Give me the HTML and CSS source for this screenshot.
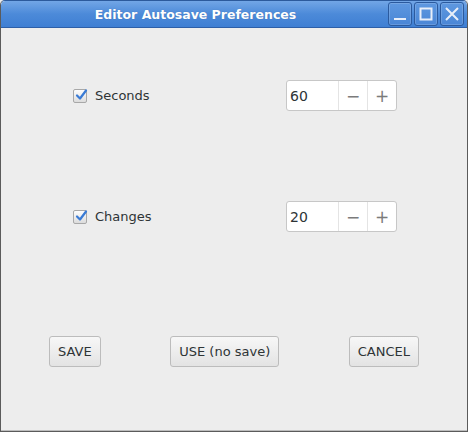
FILE: index.html
```html
<!DOCTYPE html>
<html>
<head>
<meta charset="utf-8">
<link rel="stylesheet" href="styles.css">
</head>
<body>
<div class="window">
  <div class="titlebar">
    <div class="title">Editor Autosave Preferences</div>
    <div class="wm-buttons">
      <div class="wm-btn"><svg width="22" height="22" viewBox="0 0 22 22"><rect x="5" y="15" width="12" height="2" fill="#e8eef8"/></svg></div>
      <div class="wm-btn"><svg width="22" height="22" viewBox="0 0 22 22"><rect x="5.5" y="5.5" width="11" height="11" fill="none" stroke="#e8eef8" stroke-width="2"/></svg></div>
      <div class="wm-btn"><svg width="22" height="22" viewBox="0 0 22 22"><path d="M5 5 L17 17 M17 5 L5 17" stroke="#e8eef8" stroke-width="2"/></svg></div>
    </div>
  </div>
  <div class="content">
    <div class="row">
      <label class="check">
        <span class="box"><svg width="14" height="14" viewBox="0 0 14 14"><path d="M3 7.5 L6 10.5 L12 2.5" fill="none" stroke="#3a7bd5" stroke-width="2.2" stroke-linecap="round" stroke-linejoin="round"/></svg></span>
        <span>Seconds</span>
      </label>
      <div class="spinner">
        <div class="field">60</div>
        <div class="sbtn">−</div>
        <div class="sbtn">+</div>
      </div>
    </div>
    <div class="row row2">
      <label class="check">
        <span class="box"><svg width="14" height="14" viewBox="0 0 14 14"><path d="M3 7.5 L6 10.5 L12 2.5" fill="none" stroke="#3a7bd5" stroke-width="2.2" stroke-linecap="round" stroke-linejoin="round"/></svg></span>
        <span>Changes</span>
      </label>
      <div class="spinner">
        <div class="field">20</div>
        <div class="sbtn">−</div>
        <div class="sbtn">+</div>
      </div>
    </div>
    <div class="buttons">
      <button class="btn">SAVE</button>
      <button class="btn">USE (no save)</button>
      <button class="btn">CANCEL</button>
    </div>
  </div>
</div>
</body>
</html>
```
FILE: styles.css
```css
html, body {
  margin: 0;
  padding: 0;
  background: #ededed;
}
body {
  font-family: "DejaVu Sans", sans-serif;
  font-size: 13px;
  color: #2e3436;
}
.window {
  width: 468px;
  height: 432px;
  box-sizing: border-box;
  border: 1px solid #5b5b5b;
  border-top-color: #2c5a9c;
  border-radius: 5px 5px 0 0;
  background: #ededed;
  display: flex;
  flex-direction: column;
  overflow: hidden;
  box-shadow: inset 0 -1px 0 #bdbdbd;
}
.titlebar {
  height: 26px;
  flex: none;
  display: flex;
  align-items: center;
  background: linear-gradient(#72a6e6, #4c8ad9 50%, #3f7fd3);
  border-bottom: 1px solid #2d5fa8;
  border-radius: 4px 4px 0 0;
}
.title {
  flex: 1;
  text-align: center;
  color: #fff;
  font-weight: bold;
  font-size: 12.5px;
  padding-left: 2px;
  text-shadow: 0 0 1px rgba(0,0,0,0.2);
}
.wm-buttons {
  display: flex;
  gap: 2px;
  padding-right: 3px;
}
.wm-btn {
  width: 22px;
  height: 22px;
  border: 1px solid #2b5a9e;
  border-radius: 3px;
  background: linear-gradient(#5e98e0, #4a86d6);
  box-shadow: inset 0 0 0 1px rgba(255,255,255,0.15);
}
.wm-btn svg { display: block; }
.content {
  flex: 1;
  display: flex;
  flex-direction: column;
  padding-top: 52px;
}
.row {
  display: flex;
  align-items: center;
  justify-content: space-between;
  padding: 0 70px 0 72px;
}
.row2 {
  margin-top: 90px;
}
.check {
  display: flex;
  align-items: center;
  gap: 8px;
}
.box {
  width: 12px;
  height: 12px;
  border: 1px solid #a8a8a8;
  border-radius: 2px;
  background: linear-gradient(#fdfdfd, #dcdcdc);
  position: relative;
}
.box svg {
  position: absolute;
  left: 0;
  top: -2px;
}
.spinner {
  display: flex;
  width: 111px;
  height: 31px;
  box-sizing: border-box;
  border: 1px solid #c7c7c7;
  border-radius: 3px;
  background: #fff;
}
.field {
  flex: 1;
  display: flex;
  align-items: center;
  padding-left: 3px;
  font-size: 14px;
}
.sbtn {
  width: 28px;
  border-left: 1px solid #e4e4e4;
  display: flex;
  align-items: center;
  justify-content: center;
  color: #7b7b7b;
  font-size: 17px;
}
.buttons {
  display: flex;
  justify-content: space-between;
  padding: 0 48px 0 48px;
  margin-top: 104px;
}
.btn {
  font-family: "DejaVu Sans", sans-serif;
  font-size: 13px;
  color: #2e3436;
  height: 31px;
  padding: 0 8px;
  border: 1px solid #bcbcbc;
  border-radius: 3px;
  background: linear-gradient(#f7f7f7, #e3e3e3);
}
```
